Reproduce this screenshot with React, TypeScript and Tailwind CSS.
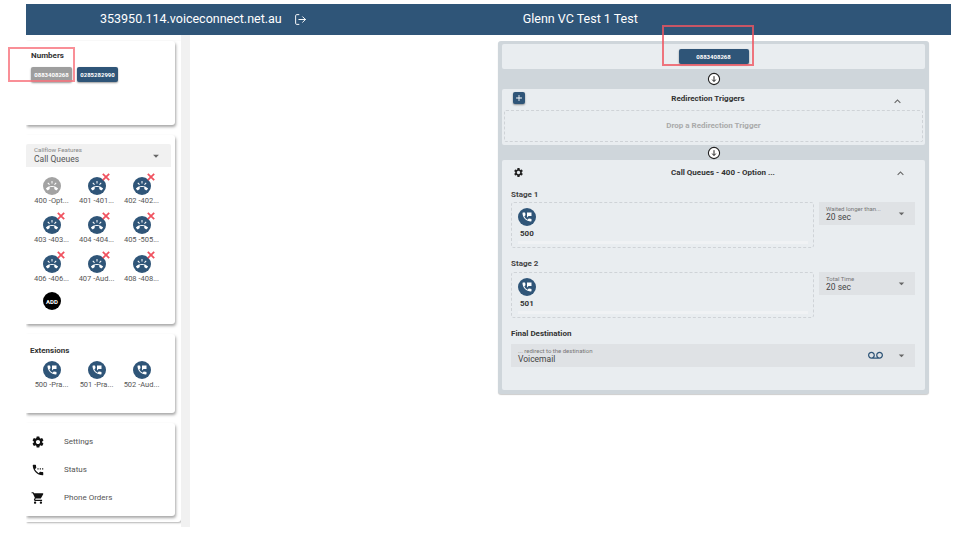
import {
  MdAdd,
  MdArrowDropDown,
  MdExpandLess,
  MdPermPhoneMsg,
  MdRingVolume,
  MdSettings,
  MdSettingsPhone,
  MdShoppingCart,
  MdVoicemail,
} from "react-icons/md";
import { LogOut } from "lucide-react";
import type { ReactNode } from "react";

const queues = [
  { label: "400 -Opt...", active: true },
  { label: "401 -401..." },
  { label: "402 -402..." },
  { label: "403 -403..." },
  { label: "404 -404..." },
  { label: "405 -505..." },
  { label: "406 -406..." },
  { label: "407 -Aud..." },
  { label: "408 -408..." },
];

const extensions = ["500 -Pra...", "501 -Pra...", "502 -Aud..."];

function Card({ className, children }: { className: string; children: ReactNode }) {
  return (
    <section className={`rounded-r-[3px] bg-white shadow-[1px_2px_3px_rgba(0,0,0,0.35)] ${className}`}>
      {children}
    </section>
  );
}

function Chip({ children, muted }: { children: ReactNode; muted?: boolean }) {
  return (
    <span
      className={`flex h-[15px] w-[41px] items-center justify-center rounded-[2px] text-[6px] font-bold text-white shadow-[0_1px_2px_rgba(0,0,0,0.4)] ${
        muted ? "bg-[#9e9e9e]" : "bg-[#2f5578]"
      }`}
    >
      {children}
    </span>
  );
}

function QueueIcon({ label, active }: { label: string; active?: boolean }) {
  return (
    <div className="flex w-[45px] flex-col items-center">
      <div className="relative">
        <div
          className={`flex h-[18px] w-[18px] items-center justify-center rounded-full ${
            active ? "bg-[#a3a3a3]" : "bg-[#2f5578]"
          }`}
        >
          <MdRingVolume className="h-[12px] w-[12px] text-white" />
        </div>
        {!active && (
          <svg viewBox="0 0 10 10" className="absolute -top-[4px] -right-[4px] h-[8px] w-[8px] text-[#f0525f]">
            <path d="M1 1 9 9M9 1 1 9" fill="none" stroke="currentColor" strokeWidth="2.2" />
          </svg>
        )}
      </div>
      <span className="mt-[1px] whitespace-nowrap text-[7.5px] leading-[10px] text-[#555]">{label}</span>
    </div>
  );
}

function ExtensionIcon({ label }: { label: string }) {
  return (
    <div className="flex w-[45px] flex-col items-center">
      <div className="flex h-[18px] w-[18px] items-center justify-center rounded-full bg-[#2f5578]">
        <MdPermPhoneMsg className="h-[12px] w-[12px] text-white" />
      </div>
      <span className="mt-[1px] whitespace-nowrap text-[7.5px] leading-[10px] text-[#555]">{label}</span>
    </div>
  );
}

function MenuRow({ icon, label }: { icon: ReactNode; label: string }) {
  return (
    <div className="flex h-[28px] items-center">
      <div className="flex w-[19px] justify-end text-[#111]">{icon}</div>
      <span className="ml-[19px] text-[8px] text-[#555]">{label}</span>
    </div>
  );
}

function Connector({ className }: { className: string }) {
  return (
    <div className={`flex items-center justify-center ${className}`}>
      <svg viewBox="0 0 14 14" className="h-[14px] w-[14px]">
        <circle cx="7" cy="7" r="5.6" fill="#fff" stroke="#222" strokeWidth="1.1" />
        <path d="M7 4.2v5M5.2 7.6 7 9.6l1.8-2" fill="none" stroke="#222" strokeWidth="1" />
      </svg>
    </div>
  );
}

function SelectBox({
  caption,
  value,
  className,
  icon,
}: {
  caption: string;
  value: string;
  className: string;
  icon?: ReactNode;
}) {
  return (
    <div className={`flex h-[23px] items-center bg-[#dfe2e5] pl-[7px] pr-[7px] ${className}`}>
      <div className="min-w-0 flex-1">
        <div className="text-[6px] leading-[7px] text-[#777]">{caption}</div>
        <div className="text-[8.5px] leading-[10px] text-[#444]">{value}</div>
      </div>
      {icon}
      <MdArrowDropDown className="h-[13px] w-[13px] text-[#666]" />
    </div>
  );
}

function StageDrop({ ext }: { ext: string }) {
  return (
    <div className="h-[46px] w-[303px] rounded-[3px] border border-dashed border-[#cfd3d7] pl-[6px] pt-[5px]">
      <div className="flex h-[18px] w-[18px] items-center justify-center rounded-full bg-[#2f5578]">
        <MdPermPhoneMsg className="h-[12px] w-[12px] text-white" />
      </div>
      <div className="ml-[2px] mt-[3px] text-[8px] font-bold leading-[10px] text-[#333]">{ext}</div>
      <div className="mr-[5px] mt-[2px] h-[3px] bg-[#f0f2f4]" />
    </div>
  );
}

export default function App() {
  return (
    <div className="relative h-[536px] w-[957px] overflow-hidden bg-white pt-[4px] font-['Roboto',sans-serif]">
      <header className="ml-[26px] flex h-[31px] w-[925px] items-center bg-[#2f5578] text-white">
        <span className="ml-[74px] text-[12.5px]">353950.114.voiceconnect.net.au</span>
        <LogOut className="ml-[12px] h-[13px] w-[13px]" strokeWidth={1.8} />
        <span className="ml-[216px] text-[12.5px]">Glenn VC Test 1 Test</span>
      </header>

      <div className="flex">
        {/* left rail */}
        <aside className="ml-[26px] h-[492px] w-[164px] shrink-0 overflow-hidden border-r-[9px] border-[#f1f1f1] pt-[6px]">
          <div className="h-[481px] w-[155px] rounded-br-[3px] pr-[6px] shadow-[1px_1px_2px_rgba(0,0,0,0.3)]">
            <Card className="h-[84px] pl-[5px] pt-[10px]">
              <h2 className="text-[8px] font-bold leading-[10px] text-[#333]">Numbers</h2>
              <div className="mt-[6px] flex gap-[5px]">
                <Chip muted>0883408268</Chip>
                <Chip>0285282990</Chip>
              </div>
            </Card>

            <Card className="mt-[10px] h-[189px] pt-[9px]">
              <div className="flex h-[23px] w-[145px] items-center rounded-t-[2px] bg-[#f1f1f1] pl-[8px] pr-[8px]">
                <div className="flex-1">
                  <div className="text-[6.25px] leading-[7px] text-[#888]">Callflow Features</div>
                  <div className="text-[8.5px] leading-[10px] text-[#555]">Call Queues</div>
                </div>
                <MdArrowDropDown className="h-[14px] w-[14px] text-[#666]" />
              </div>
              <div className="mt-[10px] ml-[3px] grid grid-cols-[45px_45px_45px] gap-y-[10px]">
                {queues.map((q) => (
                  <QueueIcon key={q.label} label={q.label} active={q.active} />
                ))}
              </div>
              <div className="ml-[17px] mt-[8px] flex h-[18px] w-[18px] items-center justify-center rounded-full bg-black text-[6px] font-bold text-white">
                ADD
              </div>
            </Card>

            <Card className="mt-[10px] h-[79px] pt-[12px]">
              <h2 className="ml-[4px] text-[8px] font-bold leading-[10px] text-[#333]">Extensions</h2>
              <div className="ml-[3px] mt-[5px] flex">
                {extensions.map((e) => (
                  <ExtensionIcon key={e} label={e} />
                ))}
              </div>
            </Card>

            <Card className="mt-[10px] h-[93px] pt-[5px]">
              <MenuRow icon={<MdSettings className="h-[14px] w-[14px]" />} label="Settings" />
              <MenuRow icon={<MdSettingsPhone className="h-[14px] w-[14px]" />} label="Status" />
              <MenuRow icon={<MdShoppingCart className="h-[14px] w-[14px]" />} label="Phone Orders" />
            </Card>
          </div>
        </aside>

        {/* call flow */}
        <main className="ml-[308px] mt-[6px] h-[353px] w-[431px] rounded-[3px] bg-[#cfd6db] px-[4px] pt-[3px] shadow-[0_1px_1px_rgba(0,0,0,0.2)]">
          <div className="flex h-[25px] items-center justify-center rounded-[2px] bg-[#e9edf0]">
            <span className="flex h-[15px] w-[70px] items-center justify-center rounded-[2px] bg-[#2f5578] text-[6px] font-bold text-white shadow-[0_1px_2px_rgba(0,0,0,0.4)]">
              0883408268
            </span>
          </div>
          <Connector className="h-[20px]" />

          <div className="h-[56px] rounded-[2px] bg-[#e9edf0] px-[2px]">
            <div className="relative flex h-[21px] items-center justify-center">
              <span className="absolute left-[9px] top-[3px] flex h-[12px] w-[12px] items-center justify-center rounded-[2px] bg-[#2f5578] shadow-[0_1px_2px_rgba(0,0,0,0.4)]">
                <MdAdd className="h-[10px] w-[10px] text-white" />
              </span>
              <span className="mb-[2px] mr-[11px] text-[8px] font-bold text-[#333]">Redirection Triggers</span>
              <MdExpandLess className="absolute right-[19px] top-[6px] h-[13px] w-[13px] text-[#666]" />
            </div>
            <div className="flex h-[32px] items-center justify-center rounded-[2px] border border-dashed border-[#cfd3d7] text-[8px] font-bold text-[#aaa]">
              Drop a Redirection Trigger
            </div>
          </div>
          <Connector className="h-[15px]" />

          <div className="h-[230px] rounded-[2px] bg-[#e9edf0] px-[9px]">
            <div className="relative flex h-[25px] items-center justify-center">
              <MdSettings className="absolute left-[2px] top-[7px] h-[11px] w-[11px] text-[#222]" />
              <span className="ml-[19px] text-[8px] font-bold text-[#333]">Call Queues - 400 - Option ...</span>
              <MdExpandLess className="absolute right-[9px] top-[7px] h-[13px] w-[13px] text-[#666]" />
            </div>

            <div className="mt-[5px] text-[8px] font-bold leading-[10px] text-[#444]">Stage 1</div>
            <div className="mt-[2px] flex gap-[5px]">
              <StageDrop ext="500" />
              <SelectBox caption="Waited longer than..." value="20 sec" className="w-[96px]" />
            </div>

            <div className="mt-[11px] text-[8px] font-bold leading-[10px] text-[#444]">Stage 2</div>
            <div className="mt-[3px] flex gap-[5px]">
              <StageDrop ext="501" />
              <SelectBox caption="Total Time" value="20 sec" className="w-[96px]" />
            </div>

            <div className="mt-[11px] text-[8px] font-bold leading-[10px] text-[#333]">Final Destination</div>
            <SelectBox
              caption="... redirect to the destination"
              value="Voicemail"
              className="mt-[5px] w-[404px]"
              icon={<MdVoicemail className="mr-[12px] h-[15px] w-[15px] text-[#2f5578]" />}
            />
          </div>
        </main>
      </div>

      {/* annotation boxes drawn over the screenshot */}
      <div className="absolute left-[8px] top-[47px] h-[35px] w-[67px] border-2 border-[#f7737d]/80" />
      <div className="absolute left-[662px] top-[25px] h-[41px] w-[92px] border-2 border-[#ef5560]/80" />
    </div>
  );
}
